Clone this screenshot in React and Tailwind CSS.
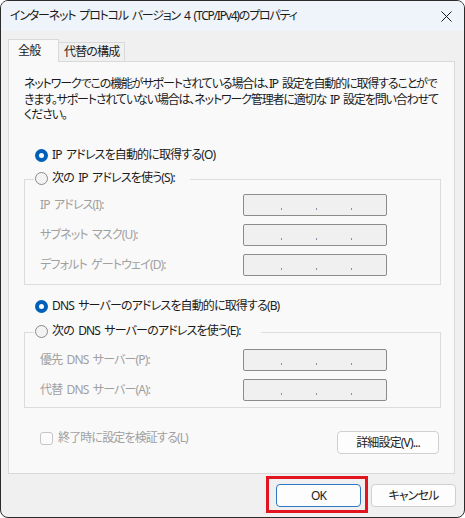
import React from 'react';

const FONT = "[font-family:'Noto_Sans','Noto_Sans_CJK_JP',sans-serif] [font-feature-settings:'palt'] [word-spacing:2px]";

const Radio = ({ checked }) =>
  checked ? (
    <span className="flex h-[13px] w-[13px] shrink-0 items-center justify-center rounded-full bg-[#005fb8]">
      <span className="h-[5px] w-[5px] rounded-full bg-white" />
    </span>
  ) : (
    <span className="h-[13px] w-[13px] shrink-0 rounded-full border border-[#8a8a8a] bg-[#f3f3f3]" />
  );

const IpBox = () => (
  <div className="flex h-[22px] w-[144px] items-start gap-[34px] rounded-[2px] border border-[#8c8c8c] bg-[#f0f0f0] pl-[37px] pt-[13px]">
    <span className="h-[2px] w-[1px] bg-[#8a8fa3]" />
    <span className="h-[2px] w-[1px] bg-[#8a8fa3]" />
    <span className="h-[2px] w-[1px] bg-[#8a8fa3]" />
  </div>
);

const FieldRow = ({ label }) => (
  <div className="flex items-center">
    <span className="w-[218px] whitespace-nowrap pl-[15px] text-[#a0a0a0]">{label}</span>
    <IpBox />
  </div>
);

const GroupLegend = ({ label, width }) => (
  <div className={`-mt-[10px] ml-[9px] flex h-[16px] items-center gap-[4px] whitespace-nowrap bg-[#f9f9f9] pl-[1px] ${width}`}>
    <Radio />
    <span className="text-[#1b1b1b]">{label}</span>
  </div>
);

export default function App() {
  return (
    <div className={`${FONT} flex h-[518px] w-[465px] flex-col overflow-hidden rounded-[8px] border border-[#2b2b2b] bg-[#f0f0f0] text-[12px] leading-[16px] tracking-[-0.85px] text-[#1b1b1b]`}>
      {/* title bar */}
      <div className="flex h-[30px] shrink-0 items-center justify-between bg-[#eef4f9] pl-[9px] pr-[10px]">
        <span className="whitespace-nowrap tracking-[-1.2px]">インターネット プロトコル バージョン 4 (TCP/IPv4)のプロパティ</span>
        <svg width="11" height="11" viewBox="0 0 11 11" className="mr-[2px]">
          <path d="M0.5 0.5 L10.5 10.5 M10.5 0.5 L0.5 10.5" stroke="#1b1b1b" strokeWidth="1" fill="none" />
        </svg>
      </div>

      {/* tabs */}
      <div className="ml-[7px] mt-[8px] flex items-end">
        <div className="relative z-10 -mb-[1px] flex h-[23px] w-[51px] items-center border border-b-0 border-[#d9d9d9] bg-[#f9f9f9] pl-[9px]">
          全般
        </div>
        <div className="-ml-[1px] flex h-[19px] w-[67px] items-center whitespace-nowrap border border-b-0 border-[#d9d9d9] bg-[#f0f0f0] pl-[5px]">
          代替の構成
        </div>
      </div>

      {/* panel */}
      <div className="ml-[7px] flex h-[413px] w-[447px] shrink-0 flex-col border border-[#d9d9d9] bg-[#f9f9f9] pl-[15px] pr-[13px] pt-[14px]">
        <div className="h-[48px] whitespace-nowrap leading-[15.5px] tracking-[-1.15px]">
          <div>ネットワークでこの機能がサポートされている場合は、IP 設定を自動的に取得することがで</div>
          <div>きます。サポートされていない場合は、ネットワーク管理者に適切な IP 設定を問い合わせて</div>
          <div>ください。</div>
        </div>

        <div className="ml-[11px] mt-[23px] flex h-[16px] items-center gap-[4px] whitespace-nowrap">
          <Radio checked />
          <span>IP アドレスを自動的に取得する(O)</span>
        </div>

        <div className="mt-[16px] flex flex-col border border-[#dcdcdc] pb-[8px]">
          <GroupLegend label="次の IP アドレスを使う(S):" width="w-[156px]" />
          <div className="mt-[8px] flex flex-col gap-[8px]">
            <FieldRow label="IP アドレス(I):" />
            <FieldRow label="サブネット マスク(U):" />
            <FieldRow label="デフォルト ゲートウェイ(D):" />
          </div>
        </div>

        <div className="ml-[11px] mt-[13px] flex h-[16px] items-center gap-[4px] whitespace-nowrap">
          <Radio checked />
          <span>DNS サーバーのアドレスを自動的に取得する(B)</span>
        </div>

        <div className="mt-[18px] flex flex-col border border-[#dcdcdc] pb-[6px]">
          <GroupLegend label="次の DNS サーバーのアドレスを使う(E):" width="w-[227px]" />
          <div className="mt-[10px] flex flex-col gap-[8px]">
            <FieldRow label="優先 DNS サーバー(P):" />
            <FieldRow label="代替 DNS サーバー(A):" />
          </div>
        </div>

        <div className="ml-[16px] mr-[2px] mt-[23px] flex items-start justify-between">
          <div className="flex h-[14px] items-center gap-[5px] whitespace-nowrap text-[#a0a0a0]">
            <span className="h-[13px] w-[13px] rounded-[3px] border border-[#c6c6c6] bg-[#fbfbfb]" />
            <span>終了時に設定を検証する(L)</span>
          </div>
          <button className="flex h-[23px] w-[102px] items-center justify-center whitespace-nowrap rounded-[4px] border border-[#d0d0d0] bg-[#fdfdfd]">
            詳細設定(V)...
          </button>
        </div>
      </div>

      {/* dialog buttons */}
      <div className="mr-[8px] mt-[10px] flex justify-end gap-[10px]">
        <div className="relative">
          <button className="flex h-[23px] w-[85px] items-center justify-center rounded-[4px] border border-[#2f78c4] bg-[#fdfdfd]">
            OK
          </button>
          <div className="pointer-events-none absolute -bottom-[6px] -left-[10px] -right-[7px] -top-[8px] border-[3px] border-[#e3141f]" />
        </div>
        <button className="flex h-[23px] w-[85px] items-center justify-center whitespace-nowrap rounded-[4px] border border-[#d0d0d0] bg-[#fdfdfd]">
          キャンセル
        </button>
      </div>
    </div>
  );
}
